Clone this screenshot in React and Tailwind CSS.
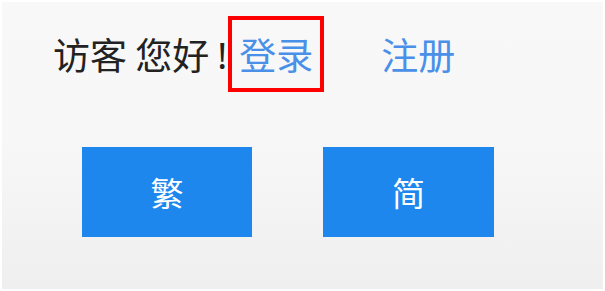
export default function App() {
  return (
    <div className="w-[605px] h-[291px] bg-white p-[2px]" style={{ fontFamily: '"Noto Sans CJK SC", "Noto Sans", sans-serif' }}>
      <div className="h-full bg-gradient-to-b from-[#f8f8f8] via-[#f7f7f7] to-[#efefef] pt-[14px] pl-[51px]">
        <div className="flex items-center h-[76px] text-[37px] leading-none">
          <span className="text-[#222]">访客 您好</span>
          <span className="text-[#222] w-[19px] pl-[8px]" style={{ fontFamily: '"Noto Sans", sans-serif' }}>!</span>
          <span className="border-4 border-[#ff0000] h-[76px] flex items-center px-[7px] text-[#4a8fe8]">登录</span>
          <span className="ml-[57px] text-[#4a8fe8]">注册</span>
        </div>
        <div className="flex gap-[71px] mt-[55px] pl-[29px]">
          <button className="w-[170px] h-[90px] bg-[#1e87ee] text-white text-[33px] leading-none flex items-center justify-center">繁</button>
          <button className="w-[171px] h-[90px] bg-[#1e87ee] text-white text-[33px] leading-none flex items-center justify-center">简</button>
        </div>
      </div>
    </div>
  );
}
